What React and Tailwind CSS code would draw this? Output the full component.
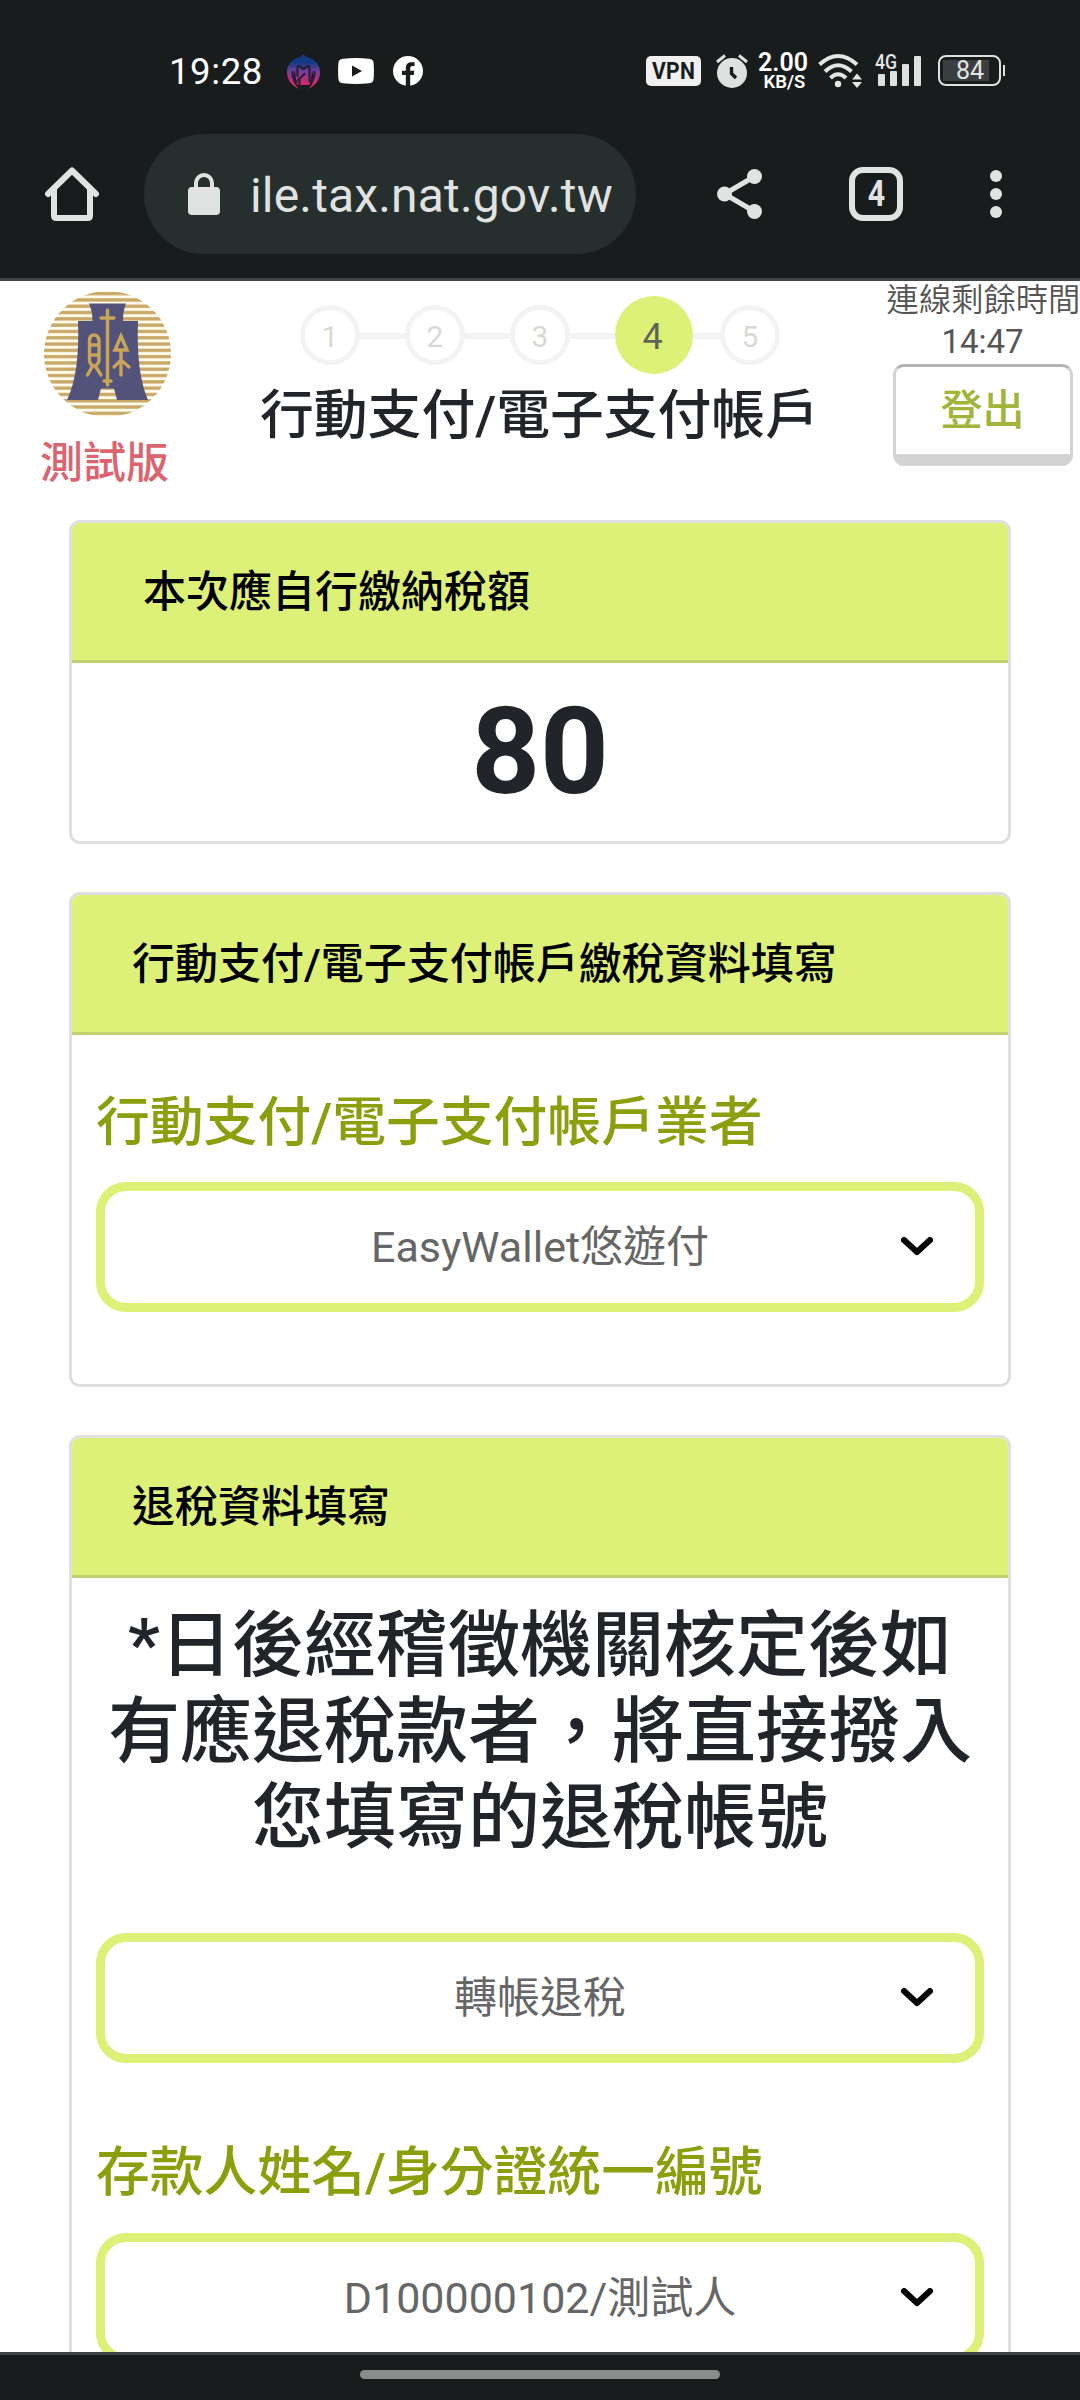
const FONT = "font-['Roboto','Noto_Sans_CJK_TC',sans-serif]";

function StatusBar() {
  return (
    <div className="flex h-[134px] items-start pt-[53px] text-white">
      <div className="ml-[169px] w-[118px] pt-[1px] text-[36.5px] leading-[36px] tracking-[0.6px] font-[450]">19:28</div>
      <svg className="mt-[1px]" width="33" height="35" viewBox="0 0 33 35">
        <defs>
          <linearGradient id="m" x1="0" y1="0" x2="0" y2="1">
            <stop offset="0.25" stopColor="#143a84" />
            <stop offset="0.5" stopColor="#743f98" />
            <stop offset="0.85" stopColor="#d6286c" />
          </linearGradient>
        </defs>
        <path d="M16.500 0L19 3C27 4 33 10 33 18C33 26 29 31 21 35C25 31 27 28 27 24L25 16L24 26Q24 31 21 31H12Q9 31 9 26L8 16L6 24C6 28 8 31 12 35C4 31 0 26 0 18C0 10 6 4 14 3Z" fill="url(#m)" />
        <path d="M5.500 18Q5 24 9.500 28M27.500 18Q28 24 23.500 28M10.500 22V14Q10.500 11.500 12.500 12L16.500 15L20.500 12Q22.500 11.500 22.500 14V27M11 26L17.500 20M12.500 31V26" fill="none" stroke="#2a1c3c" strokeWidth="2.200" strokeLinecap="round" />
      </svg>
      <svg className="ml-[18px] mt-[5px]" width="36" height="26" viewBox="0 0 36 26">
        <path d="M5 .7Q18-.7 31 .7Q35.300 1 35.600 5Q36.300 13 35.600 21Q35.300 25 31 25.300Q18 26.700 5 25.300Q.7 25 .4 21Q-.3 13 .4 5Q.7 1 5 .7Z" fill="#fff" />
        <path d="M14 7.500L24 13L14 18.500Z" fill="#191c1d" />
      </svg>
      <svg className="ml-[19px] mt-[3px]" width="30" height="30" viewBox="0 0 30 30">
        <circle cx="15" cy="15" r="15" fill="#fff" />
        <path d="M12.800 30V19H9V14.800H12.800V12Q12.800 6.300 18.500 6.300H21.600V10H19.500Q17.200 10 17.200 12.300V14.800H21.400L20.700 19H17.200V30Z" fill="#191c1d" />
      </svg>
      <div className="ml-[223px] mt-[3px] flex h-[30px] w-[55px] items-center justify-center rounded-[5px] bg-[#f0f0f0] text-[23px] font-bold leading-none tracking-[0.3px] text-[#191c1d]">
        <span className="scale-x-[0.92]">VPN</span>
      </div>
      <svg className="ml-[15px] mt-[1px]" width="32" height="35" viewBox="0 0 32 35" fill="none">
        <circle cx="16" cy="19" r="15" fill="#dfe0e0" />
        <path d="M1 8L9 1.500M31 8L23 1.500" stroke="#dfe0e0" strokeWidth="3" />
        <path d="M15.500 13V19.500L20 24" stroke="#191c1d" strokeWidth="3.400" />
      </svg>
      <div className="ml-[8px] flex w-[54px] flex-col items-center">
        <span className="text-[25px] font-semibold leading-[20px]">2.00</span>
        <span className="pl-[3px] text-[18.5px] font-semibold leading-[18px]">KB/S</span>
      </div>
      <svg className="ml-[8px]" width="44" height="35" viewBox="0 0 44 35" fill="none" stroke="#e4e5e5" strokeWidth="4">
        <path d="M1.500 11.500Q20 -5.500 39 11.500M7 18.500Q20 6 33.500 18.500M12.500 25Q20 17.500 28 25" />
        <circle cx="20" cy="31" r="3.200" fill="#e4e5e5" stroke="none" />
        <path d="M34 26.500L39 20.500L44 26.500ZM34 29L39 35L44 29Z" fill="#e4e5e5" stroke="none" />
      </svg>
      <div className="relative ml-[13px] h-[34px] w-[46px]">
        <span className="absolute left-0 top-0 origin-left scale-x-[0.84] text-[21px] font-medium leading-[18px] text-[#e4e5e5]">4G</span>
        <svg className="absolute left-[3px] top-[3px]" width="43" height="30" viewBox="0 0 43 30" fill="#dfe0e0">
          <rect x="0" y="18" width="7" height="12" rx="1" />
          <rect x="12" y="15" width="7" height="15" rx="1" />
          <rect x="24" y="8" width="7" height="22" rx="1" />
          <rect x="36" y="0" width="7" height="30" rx="1" />
        </svg>
      </div>
      <div className="ml-[17px] mt-[2px] flex items-center">
        <div className="h-[31px] w-[63px] rounded-[8px] border-2 border-[#dfe0e0] p-[3px]">
          <div className="flex h-[21px] w-[46px] items-center justify-center bg-[#3b3f40] pl-[8px] text-[25px] leading-none text-[#e4e5e5]">84</div>
        </div>
        <div className="ml-[2px] h-[11px] w-[2px] bg-[#dfe0e0]" />
      </div>
    </div>
  );
}

function AddressBar() {
  return (
    <div className="flex h-[120px] items-center text-[#e1e3e2]">
      <svg className="ml-[45px]" width="54" height="54" viewBox="0 0 54 54" fill="none" stroke="#e1e3e2" strokeWidth="6" strokeLinejoin="round" strokeLinecap="round">
        <path d="M3 27L27 3.500L51 27" />
        <path d="M9 22V48.500Q9 51 11.500 51H42.500Q45 51 45 48.500V22" />
      </svg>
      <div className="ml-[45px] flex h-[120px] w-[492px] items-center rounded-full bg-[#262f2e]">
        <svg className="ml-[44px]" width="32" height="42" viewBox="0 0 32 42">
          <path d="M8 16V10a8 8 0 0 1 16 0V16" fill="none" stroke="#e1e3e2" strokeWidth="4" />
          <rect y="14" width="32" height="28" rx="4" fill="#e1e3e2" />
        </svg>
        <span className="ml-[30px] whitespace-nowrap pt-[3px] text-[48px] leading-[56px] tracking-[0.17px]">ile.tax.nat.gov.tw</span>
      </div>
      <svg className="ml-[81px]" width="45" height="50" viewBox="0 0 45 50" fill="#e1e3e2">
        <path d="M37.500 7.500L7.500 25L37.500 42.500" fill="none" stroke="#e1e3e2" strokeWidth="5" />
        <circle cx="37.500" cy="7.500" r="7.500" />
        <circle cx="7.500" cy="25" r="7.500" />
        <circle cx="37.500" cy="42.500" r="7.500" />
      </svg>
      <div className="ml-[87px] flex h-[54px] w-[54px] items-center justify-center rounded-[14px] border-6 border-[#e1e3e2] text-[36px] font-bold leading-none">
        <span className="scale-x-[0.84]">4</span>
      </div>
      <div className="ml-[87px] flex flex-col gap-[6px]">
        <i className="size-[12px] rounded-full bg-[#e1e3e2]" />
        <i className="size-[12px] rounded-full bg-[#e1e3e2]" />
        <i className="size-[12px] rounded-full bg-[#e1e3e2]" />
      </div>
    </div>
  );
}

function Logo() {
  return (
    <svg width="127" height="126" viewBox="0 0 127 126">
      <defs>
        <pattern id="stripes" width="127" height="6.300" patternUnits="userSpaceOnUse">
          <rect width="127" height="6.300" fill="#fffbea" />
          <rect y="1" width="127" height="3.300" fill="#c9a766" />
        </pattern>
      </defs>
      <ellipse cx="63.500" cy="63" rx="63.500" ry="63" fill="url(#stripes)" />
      <path d="M45 12.500H82Q79 20 79 30H94Q92 82 104 109H73L70 97.500H57L54 109H23Q36 82 34 30H48.500Q48.500 20 45 12.500Z" fill="#53527a" />
      <g fill="none" stroke="#c9a55a" strokeWidth="3.400" strokeLinecap="round">
        <path d="M63.500 19V94M57 27H70M60 90H67" />
        <path d="M45.500 70V50Q45.500 44 50 44T55 50V70Q53 75 50 75T45.500 70M45.500 54H55M45.500 64H55M48 76L43.500 84M52 76L57 84" />
        <path d="M77 45L71 59H83ZM77 59V84M77 69L70 76M77 69L85 76" />
      </g>
    </svg>
  );
}

function Step({ n }) {
  return (
    <div className="flex size-[60px] items-center justify-center rounded-full border-[5px] border-[#f3f3f3] pt-[3px] text-[30px] leading-none text-[#d9d9d3]">
      {n}
    </div>
  );
}

function Line({ short }) {
  return <div className={short ? "mt-[2px] h-[6px] w-[27px] bg-[#f3f3f3]" : "mt-[2px] h-[6px] w-[45px] bg-[#f3f3f3]"} />;
}

function PageHeader() {
  return (
    <header className="flex h-[239px] items-start">
      <div className="ml-[44px] mt-[10px] w-[127px]">
        <Logo />
        <div className="-ml-[4px] mt-[15px] whitespace-nowrap text-[43px] font-medium leading-[62px] text-[#dc6470]">測試版</div>
      </div>
      <div className="ml-[89px] mt-[15px] w-[560px]">
        <div className="ml-[40px] flex h-[78px] items-center">
          <Step n={1} /><Line /><Step n={2} /><Line /><Step n={3} /><Line />
          <div className="flex size-[78px] items-center justify-center rounded-full bg-[#ddf077] pr-[3px] pt-[4px] text-[36px] leading-none text-[#5f6456]">4</div>
          <Line short /><Step n={5} />
        </div>
        <h1 className="whitespace-nowrap pt-[3px] text-[53.8px] font-medium leading-[78px] text-[#212529]">行動支付/電子支付帳戶</h1>
      </div>
      <div className="ml-[65px] flex w-[195px] flex-col items-center text-[#555]">
        <div className="whitespace-nowrap pl-[2px] text-[32.300px] font-[350] leading-[38px]">連線剩餘時間</div>
        <div className="pt-px text-[33px] leading-[44px]">14:47</div>
        <button className="flex h-[102px] w-[180px] justify-center rounded-[11px] border-x-3 border-t-3 border-b-12 border-[#d3d3d3] border-t-[#b4b4b4] pt-[14px] text-[42px] font-medium leading-[60px] text-[#a2b53a]">登出</button>
      </div>
    </header>
  );
}

function Card({ title, wide, className, children }) {
  return (
    <section className={"mx-[69px] overflow-hidden rounded-[11px] border-3 border-[#dfdfdf] bg-white " + className}>
      <h2 className={"h-[140px] border-b-3 border-[#c2cf70] bg-[#ddf077] pt-[38px] text-[43px] font-medium leading-[62px] text-black " + (wide ? "pl-[71px]" : "pl-[60px]")}>{title}</h2>
      {children}
    </section>
  );
}

function Label({ children }) {
  return <div className="whitespace-nowrap text-[53.8px] font-medium leading-[78px] text-[#8b9f0c]">{children}</div>;
}

function Select({ value }) {
  return (
    <div className="relative flex h-[130px] items-center justify-center rounded-[30px] border-9 border-[#ddf077] bg-white text-[43px] leading-[62px] text-[#666]">
      <span>{value}</span>
      <svg className="absolute right-[42px] top-[46px]" width="32" height="19" viewBox="0 0 32 19" fill="none">
        <path d="M3 3L16 15L29 3" stroke="#000" strokeWidth="6" strokeLinecap="round" strokeLinejoin="round" />
      </svg>
    </div>
  );
}

export default function App() {
  return (
    <div className={"flex h-[2400px] w-[1080px] flex-col overflow-hidden bg-white " + FONT}>
      <div className="h-[281px] shrink-0 border-b-3 border-[#3e4645] bg-[#191c1d]">
        <StatusBar />
        <AddressBar />
      </div>
      <main className="h-[2071px] shrink-0 overflow-hidden">
        <PageHeader />
        <Card title="本次應自行繳納稅額" wide className="h-[324px]">
          <div className="pt-[17px] text-center text-[120px] font-bold leading-[144px] text-[#212529]">80</div>
        </Card>
        <Card title="行動支付/電子支付帳戶繳稅資料填寫" className="mt-[48px] h-[495px]">
          <div className="px-[24px] pt-[49px]">
            <Label>行動支付/電子支付帳戶業者</Label>
            <div className="mt-[20px]"><Select value="EasyWallet悠遊付" /></div>
          </div>
        </Card>
        <Card title="退稅資料填寫" className="mt-[48px] h-[1100px]">
          <div className="px-[24px] pt-[25px]">
            <p className="whitespace-nowrap text-center text-[72px] font-medium leading-[86px] text-[#212529]">
              *日後經稽徵機關核定後如<br />有應退稅款者，將直接撥入<br />您填寫的退稅帳號
            </p>
            <div className="mt-[72px]"><Select value="轉帳退稅" /></div>
            <div className="mt-[71px]"><Label>存款人姓名/身分證統一編號</Label></div>
            <div className="mt-[21px]"><Select value="D100000102/測試人" /></div>
          </div>
        </Card>
      </main>
      <footer className="h-[48px] shrink-0 border-t-3 border-[#3e4645] bg-[#191c1d] pt-[15px]">
        <div className="mx-auto h-[9px] w-[360px] rounded-full bg-[#8b8d8c]" />
      </footer>
    </div>
  );
}
